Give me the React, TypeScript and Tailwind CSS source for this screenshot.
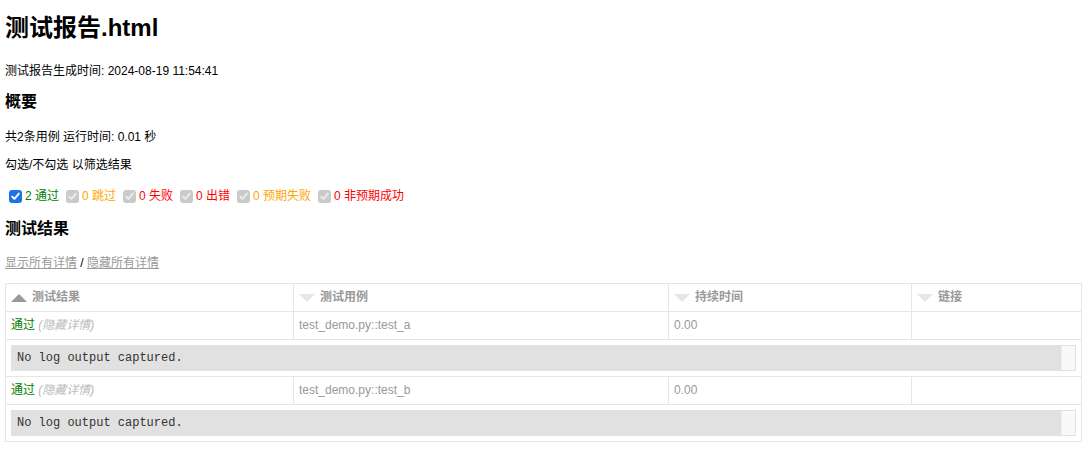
import React from "react";

const font = { fontFamily: '"Liberation Sans", Arial, "Noto Sans CJK SC", sans-serif' };

function Check({ active }: { active: boolean }) {
  return (
    <span
      className={
        "inline-flex items-center justify-center w-[13px] h-[13px] rounded-[3px] ml-[4px] mr-[3px] " +
        (active ? "bg-[#1a73e8]" : "bg-[#cacaca]")
      }
    >
      <svg width="11" height="11" viewBox="0 0 11 11">
        <path
          d="M2.2 5.6 L4.4 7.9 L8.9 2.6"
          fill="none"
          stroke={active ? "#ffffff" : "#ececec"}
          strokeWidth="1.9"
          strokeLinecap="round"
          strokeLinejoin="round"
        />
      </svg>
    </span>
  );
}

function Filter({ active, text, color }: { active: boolean; text: string; color: string }) {
  return (
    <span className="inline-flex items-center mr-[3px]">
      <Check active={active} />
      <span className={color}>{text}</span>
    </span>
  );
}

function SortHead({ label, active }: { label: string; active?: boolean }) {
  return (
    <th className="border border-[#e6e6e6] px-[5px] py-[5px] text-left font-bold text-[#999] leading-[17px]">
      {active ? (
        <span className="float-left mt-[5px] mr-[5px] w-0 h-0 border-l-[8px] border-r-[8px] border-l-transparent border-r-transparent border-b-[8px] border-b-[#999]" />
      ) : (
        <span className="float-left mt-[5px] mr-[5px] w-0 h-0 border-l-[8px] border-r-[8px] border-l-transparent border-r-transparent border-t-[8px] border-t-[#e6e6e6]" />
      )}
      {label}
    </th>
  );
}

function ResultRows({ name }: { name: string }) {
  return (
    <>
      <tr>
        <td className="border border-[#e6e6e6] px-[5px] py-[5px] leading-[17px]">
          <span className="text-[#008000]">通过</span>
          <span className="italic text-[#bbb]"> (隐藏详情)</span>
        </td>
        <td className="border border-[#e6e6e6] px-[5px] py-[5px] leading-[17px] text-[#999]">{name}</td>
        <td className="border border-[#e6e6e6] px-[5px] py-[5px] leading-[17px] text-[#999]">0.00</td>
        <td className="border border-[#e6e6e6] px-[5px] py-[5px] leading-[17px]"></td>
      </tr>
      <tr>
        <td colSpan={4} className="border border-[#e6e6e6] px-[5px] py-[5px]">
          <div className="flex h-[26px] border border-[#e1e1e1] bg-[#e1e1e1]">
            <div
              className="flex-1 px-[5px] py-[5px] text-[12px] leading-[14px] text-[#333]"
              style={{ fontFamily: '"Liberation Mono", "Courier New", monospace' }}
            >
              No log output captured.
            </div>
            <div className="w-[14px] bg-[#f9f9f9] border-l border-[#ececec]" />
          </div>
        </td>
      </tr>
    </>
  );
}

export default function App() {
  return (
    <div className="bg-white min-h-[452px] pl-[5px] pr-[7px] pt-[14px] text-[12px] text-[#999]" style={font}>
      <h1 className="text-[24px] font-bold leading-[28px] text-black">测试报告.html</h1>
      <p className="mt-[21px] leading-[16px] text-black">测试报告生成时间: 2024-08-19 11:54:41</p>
      <h2 className="mt-[13px] text-[16px] font-bold leading-[20px] text-black">概要</h2>
      <p className="mt-[17px] leading-[16px] text-black">共2条用例 运行时间: 0.01 秒</p>
      <p className="mt-[12px] leading-[16px] text-black">勾选/不勾选 以筛选结果</p>
      <div className="mt-[15px] h-[16px] flex items-center leading-[16px]">
        <Filter active text="2 通过" color="text-[#008000]" />
        <Filter active={false} text="0 跳过" color="text-[#ffa500]" />
        <Filter active={false} text="0 失败" color="text-[#ff0000]" />
        <Filter active={false} text="0 出错" color="text-[#ff0000]" />
        <Filter active={false} text="0 预期失败" color="text-[#ffa500]" />
        <Filter active={false} text="0 非预期成功" color="text-[#ff0000]" />
      </div>
      <h2 className="mt-[15px] text-[16px] font-bold leading-[20px] text-black">测试结果</h2>
      <div className="mt-[16px] leading-[16px] text-black">
        <span className="underline text-[#999]">显示所有详情</span> / <span className="underline text-[#999]">隐藏所有详情</span>
      </div>
      <table className="mt-[12px] w-full table-fixed border-collapse border border-[#e6e6e6] text-[12px]">
        <colgroup>
          <col style={{ width: 288 }} />
          <col style={{ width: 375 }} />
          <col style={{ width: 243 }} />
          <col />
        </colgroup>
        <thead>
          <tr>
            <SortHead label="测试结果" active />
            <SortHead label="测试用例" />
            <SortHead label="持续时间" />
            <SortHead label="链接" />
          </tr>
        </thead>
        <tbody>
          <ResultRows name="test_demo.py::test_a" />
        </tbody>
        <tbody>
          <ResultRows name="test_demo.py::test_b" />
        </tbody>
      </table>
    </div>
  );
}
